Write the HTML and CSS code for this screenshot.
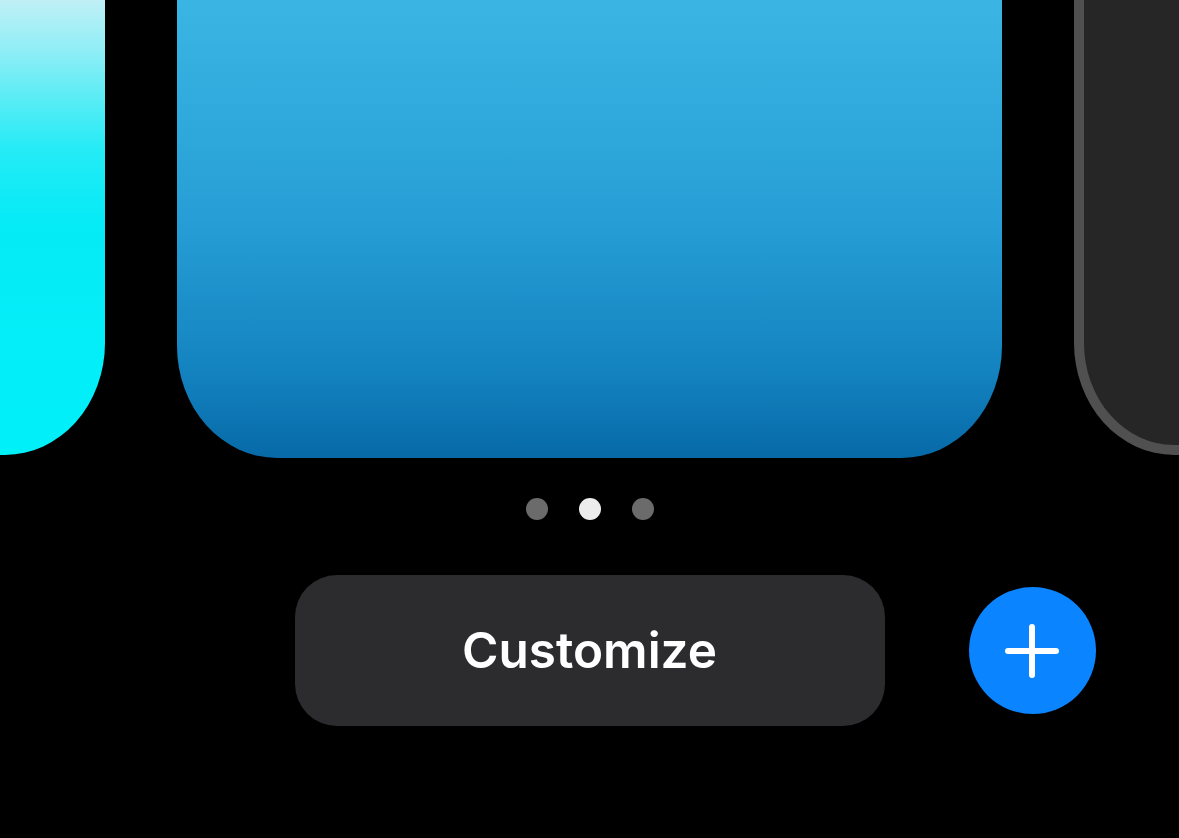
FILE: index.html
```html
<!DOCTYPE html>
<html lang="en">
<head>
<meta charset="utf-8">
<title>Customize</title>
<link rel="stylesheet" href="styles.css">
</head>
<body>
<div class="screen">
  <div class="carousel">
    <div class="card card-cyan"></div>
    <div class="card card-blue"></div>
    <div class="card card-dark"></div>
  </div>
  <div class="dots">
    <span class="dot"></span>
    <span class="dot active"></span>
    <span class="dot"></span>
  </div>
  <div class="actions">
    <button class="customize">Customize</button>
    <button class="add" aria-label="Add">
      <svg width="56" height="56" viewBox="0 0 56 56">
        <path d="M28 4 V52 M4 28 H52" stroke="#fff" stroke-width="6" stroke-linecap="round" fill="none"/>
      </svg>
    </button>
  </div>
</div>
</body>
</html>
```
FILE: styles.css
```css
* { box-sizing: border-box; }
html, body {
  margin: 0;
  padding: 0;
  background: #000;
  width: 1179px;
  height: 838px;
  overflow: hidden;
}
.screen {
  display: flex;
  flex-direction: column;
  width: 1179px;
  height: 838px;
}
.carousel {
  height: 458px;
  display: flex;
  justify-content: center;
  align-items: flex-end;
  gap: 72px;
  overflow: hidden;
}
.card {
  flex: 0 0 825px;
  height: 760px;
  border-radius: 0 0 100px 100px / 0 0 112px 112px;
}
.card-cyan {
  margin-bottom: 3px;
  background: linear-gradient(180deg,
    #c0f0f6 305px,
    #90eef6 355px,
    #58ecf5 405px,
    #24ebf6 455px,
    #06ebf6 525px,
    #00f0fa 760px);
}
.card-blue {
  background: linear-gradient(180deg, #4cc4ef 0%, #3ab5e3 40%, #279fd6 68%, #1484c0 88%, #0769a8 100%);
}
.card-dark {
  margin-bottom: 3px;
  background: #262626;
  border: 10px solid #505050;
}
.dots {
  display: flex;
  justify-content: center;
  gap: 31px;
  margin-top: 40px;
}
.dot {
  width: 22px;
  height: 22px;
  border-radius: 50%;
  background: #6b6b6b;
}
.dot.active {
  background: #ececec;
}
.actions {
  display: grid;
  grid-template-columns: 1fr 590px 1fr;
  align-items: center;
  margin-top: 55px;
}
.customize {
  grid-column: 2;
  height: 151px;
  border: none;
  border-radius: 42px;
  background: #2c2c2e;
  color: #fff;
  font-family: Inter, "Liberation Sans", sans-serif;
  font-weight: 600;
  font-size: 49.5px;
  letter-spacing: 0;
  padding: 0 0 1px;
}
.add {
  grid-column: 3;
  justify-self: start;
  margin-left: 84px;
  width: 127px;
  height: 127px;
  border: none;
  border-radius: 50%;
  background: #0a84ff;
  display: flex;
  align-items: center;
  justify-content: center;
  padding: 0;
}
.add svg { display: block; }
```
